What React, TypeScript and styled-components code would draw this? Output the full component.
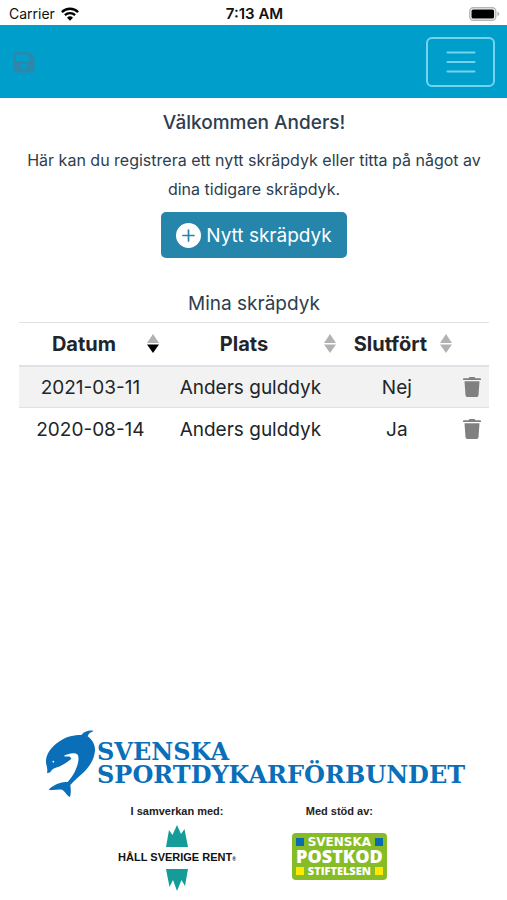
import React, { useState } from 'react';
import styled, { createGlobalStyle } from 'styled-components';

const GlobalStyle = createGlobalStyle`
  *, *::before, *::after { box-sizing: border-box; }
  body {
    margin: 0;
    background: #fff;
    color: #212529;
    font-family: Inter, "Liberation Sans", sans-serif;
  }
`;

const Page = styled.div`
  display: flex;
  flex-direction: column;
  min-height: 100vh;
`;

const StatusBar = styled.div`
  display: grid;
  grid-template-columns: 1fr auto 1fr;
  align-items: center;
  height: 25px;
  padding: 2px 7px 0 9px;
  font-size: 14px;
  color: #111;
`;

const Carrier = styled.div`
  display: flex;
  align-items: center;
  gap: 6px;
`;

const Clock = styled.div`
  font-size: 15px;
  font-weight: 600;
`;

const BatterySlot = styled.div`
  display: flex;
  justify-content: flex-end;
`;

const NavBar = styled.header`
  display: flex;
  align-items: center;
  justify-content: space-between;
  height: 73px;
  padding: 0 12px;
  background: #009fcb;
`;

const SaveButton = styled.button`
  display: flex;
  padding: 0;
  border: 0;
  background: none;
  color: #2f86ab;
`;

const MenuButton = styled.button`
  display: flex;
  align-items: center;
  justify-content: center;
  width: 69px;
  height: 50px;
  padding: 0;
  border: 2px solid #73d4f0;
  border-radius: 6px;
  background: none;
  color: #73d4f0;
`;

const Main = styled.main`
  padding: 11px 18px 24px 19px;
  text-align: center;
  color: #2c3e50;
`;

const Title = styled.h1`
  margin: 0;
  font-size: 19px;
  line-height: 28px;
  font-weight: 500;
`;

const Intro = styled.p`
  margin: 9px 0 8px;
  font-size: 16px;
  line-height: 29px;
`;

const NewButton = styled.button`
  display: inline-flex;
  align-items: center;
  gap: 5px;
  height: 46px;
  padding: 1px 15px 0;
  border: 0;
  border-radius: 5px;
  background: #2585ab;
  color: #fff;
  font: inherit;
  font-size: 19px;
`;

const DiveTable = styled.table`
  width: 100%;
  margin-top: 32px;
  border-collapse: collapse;
  table-layout: fixed;
  font-size: 19px;
  line-height: 28px;
  color: #212529;
`;

const Caption = styled.caption`
  padding-bottom: 4px;
  color: #2c3e50;
`;

const HeadCell = styled.th<{ $width: string }>`
  width: ${(p) => p.$width};
  height: 43px;
  padding: 0 3px 0 2px;
  border-top: 1px solid #dee2e6;
  border-bottom: 2px solid #dee2e6;
  font-size: 20px;
`;

const SortButton = styled.button`
  display: flex;
  align-items: center;
  width: 100%;
  padding: 0;
  border: 0;
  background: none;
  color: inherit;
  font: inherit;
`;

const SortLabel = styled.span`
  flex: 1;
`;

const Row = styled.tr`
  height: 42px;
  &:nth-child(odd) { background: #f2f2f2; }
  & + & { border-top: 1px solid #dee2e6; }
`;

const Cell = styled.td`
  padding: 3px 0 0;
`;

const DeleteButton = styled.button`
  display: flex;
  margin: 0 auto;
  padding: 0 0 3px;
  border: 0;
  background: none;
  color: #808080;
`;

const Footer = styled.footer`
  margin-top: auto;
  padding: 0 40px 9px 44px;
`;

const Federation = styled.div`
  display: flex;
  align-items: center;
`;

const FederationName = styled.div`
  color: #0a6fb8;
  font-family: "DejaVu Serif", serif;
  font-weight: 700;
  font-size: 24px;
  line-height: 23px;
`;

const Partners = styled.div`
  display: flex;
  justify-content: center;
  gap: 56px;
  margin-top: 5px;
  padding-right: 6px;
`;

const Partner = styled.div`
  display: flex;
  flex-direction: column;
  align-items: center;
  font-family: "Liberation Sans", Arial, sans-serif;
  font-weight: 700;
`;

const PartnerLabel = styled.div`
  font-size: 11px;
  line-height: 16px;
  color: #222;
`;

const RentLogo = styled.div`
  display: flex;
  flex-direction: column;
  align-items: center;
  margin-top: 6px;
  font-size: 11px;
  line-height: 20px;
  color: #111;
`;

const Registered = styled.small`
  font-size: 5px;
`;

const PostkodLogo = styled.div`
  display: flex;
  flex-direction: column;
  justify-content: space-between;
  width: 95px;
  height: 47px;
  margin-top: 14px;
  padding: 4px;
  border-radius: 4px;
  background: #86bc25;
  color: #fff;
  font-family: "DejaVu Sans", sans-serif;
`;

const PostkodLine = styled.div`
  display: flex;
  align-items: center;
  justify-content: space-between;
  height: 10px;
  font-size: 12px;
  line-height: 10px;
`;

const Postkod = styled.div`
  font-family: "Open Sans", sans-serif;
  font-weight: 800;
  font-size: 18px;
  line-height: 19px;
  text-align: center;
`;

const Stiftelsen = styled.span`
  font-family: "Open Sans", sans-serif;
  font-size: 11px;
  font-weight: 800;
`;

const Square = styled.span<{ $color: string }>`
  width: 8px;
  height: 8px;
  background: ${(p) => p.$color};
`;

const WifiIcon = () => (
  <svg width="18" height="14" viewBox="0 0 18 14" fill="none" stroke="#000" strokeWidth="2.4" aria-hidden="true">
    <path d="M.9 5.1a11.6 11.6 0 0 1 16.2 0" />
    <path d="M3.9 8.2a7.3 7.3 0 0 1 10.2 0" />
    <path d="M9 13.8 6 10.8a4.3 4.3 0 0 1 6 0z" fill="#000" stroke="none" />
  </svg>
);

const BatteryIcon = () => (
  <svg width="31" height="14" viewBox="0 0 31 14" aria-hidden="true">
    <rect x=".8" y=".8" width="26" height="12.4" rx="3.5" fill="#fff" stroke="#b5b5b5" strokeWidth="1.4" />
    <rect x="2.5" y="2.5" width="22.6" height="9" rx="1.6" />
    <path d="M28.4 4.8q2 .6 2 2.2t-2 2.2z" fill="#b5b5b5" />
  </svg>
);

const SaveIcon = () => (
  <svg width="24" height="24" viewBox="0 0 24 24" aria-hidden="true">
    <path d="M3.500 2H17.500L22.500 7v13.500a2 2 0 0 1-2 2h-17a2 2 0 0 1-2-2V4a2 2 0 0 1 2-2z" fill="currentColor" />
    <path d="M4 4.500h11.500L17 6v5H4z" fill="#009fcb" />
    <circle cx="12" cy="16.500" r="2.800" fill="#009fcb" />
  </svg>
);

const MenuIcon = () => (
  <svg width="30" height="24" viewBox="0 0 30 24" stroke="currentColor" strokeWidth="2" strokeLinecap="round" aria-hidden="true">
    <path d="M1.500 2.500h27M1.500 12h27M1.500 21.500h27" />
  </svg>
);

const PlusIcon = () => (
  <svg width="25" height="25" viewBox="0 0 25 25" aria-hidden="true">
    <circle cx="12.500" cy="12.500" r="12.500" fill="#fff" />
    <path d="M12.500 7v11M7 12.500h11" stroke="#2585ab" strokeWidth="1.700" strokeLinecap="round" />
  </svg>
);

const SortIcon = ({ active }: { active: boolean }) => (
  <svg width="12" height="20" viewBox="0 0 12 20" aria-hidden="true">
    <path d="M6 0l6 9H0z" fill="#b2b2b2" />
    <path d="M0 10.500h12L6 19z" fill={active ? '#000' : '#b2b2b2'} />
  </svg>
);

const TrashIcon = () => (
  <svg width="18" height="20" viewBox="0 0 18 20" fill="currentColor" aria-hidden="true">
    <path d="M.8 1.200h4.700L6.500 0h5l1 1.200h4.700q.8 0 .8.800v1H0V2q0-.8.800-.8zM1.500 4.200h15l-1 14q-.2 1.800-1.700 1.800H4.200q-1.500 0-1.700-1.800z" />
  </svg>
);

const Dolphin = () => (
  <svg width="53" height="70" viewBox="6 6 159 210" role="img" aria-label="Delfin">
    <path
      fill="#0a6fb8"
      d="M155 15C146 12 130 13 118 27C96 27 74 31 54 45C28 61 10 86 12 110C13 119 18 128 15 142L25 139C29 129 41 124 51 122C65 116 78 107 88 98L84 92C79 91 72 93 65 90C74 84 98 77 107 86C112 95 109 111 104 124C98 142 88 155 77 168C61 168 38 173 20 191C34 194 48 189 60 191C70 197 75 209 84 213C88 201 86 186 85 177C96 163 112 152 126 138C143 121 157 99 159 74C160 56 151 42 137 31C139 23 146 18 155 15Z"
    />
    <circle cx="34" cy="107" r="2.500" fill="#fff" />
  </svg>
);

const Peaks = ({ down = false }: { down?: boolean }) => (
  <svg width="22" height="22" viewBox="0 0 22 22" fill="#169c98" aria-hidden="true">
    <path d={down
      ? 'M0 0h22l-3 17-3.500-6-4.500 11-4-11-3.500 7z'
      : 'M0 22L3 5l3.500 5L11 0l4 9 3.500-5L22 22z'} />
  </svg>
);

type SortKey = 'date' | 'place' | 'done';

const columns: { key: SortKey; label: string; width: string }[] = [
  { key: 'date', label: 'Datum', width: '30.4%' },
  { key: 'place', label: 'Plats', width: '37.7%' },
  { key: 'done', label: 'Slutfört', width: '24.6%' },
];

const dives = [
  { date: '2021-03-11', place: 'Anders gulddyk', done: 'Nej' },
  { date: '2020-08-14', place: 'Anders gulddyk', done: 'Ja' },
];

export default function App() {
  const [sortKey, setSortKey] = useState<SortKey>('date');
  const rows = [...dives].sort((a, b) => b[sortKey].localeCompare(a[sortKey]));

  return (
    <>
      <GlobalStyle />
      <Page>
        <StatusBar>
          <Carrier>Carrier <WifiIcon /></Carrier>
          <Clock>7:13 AM</Clock>
          <BatterySlot><BatteryIcon /></BatterySlot>
        </StatusBar>
        <NavBar>
          <SaveButton aria-label="Spara"><SaveIcon /></SaveButton>
          <MenuButton aria-label="Meny"><MenuIcon /></MenuButton>
        </NavBar>
        <Main>
          <Title>Välkommen Anders!</Title>
          <Intro>Här kan du registrera ett nytt skräpdyk eller titta på något av dina tidigare skräpdyk.</Intro>
          <NewButton><PlusIcon />Nytt skräpdyk</NewButton>
          <DiveTable>
            <Caption>Mina skräpdyk</Caption>
            <thead>
              <tr>
                {columns.map((c) => (
                  <HeadCell key={c.key} $width={c.width} aria-sort={sortKey === c.key ? 'descending' : 'none'}>
                    <SortButton onClick={() => setSortKey(c.key)}>
                      <SortLabel>{c.label}</SortLabel>
                      <SortIcon active={sortKey === c.key} />
                    </SortButton>
                  </HeadCell>
                ))}
                <HeadCell $width="7.3%" aria-label="Ta bort" />
              </tr>
            </thead>
            <tbody>
              {rows.map((d) => (
                <Row key={d.date}>
                  <Cell>{d.date}</Cell>
                  <Cell>{d.place}</Cell>
                  <Cell>{d.done}</Cell>
                  <Cell><DeleteButton aria-label={`Ta bort ${d.date}`}><TrashIcon /></DeleteButton></Cell>
                </Row>
              ))}
            </tbody>
          </DiveTable>
        </Main>
        <Footer>
          <Federation>
            <Dolphin />
            <FederationName>SVENSKA<br />SPORTDYKARFÖRBUNDET</FederationName>
          </Federation>
          <Partners>
            <Partner>
              <PartnerLabel>I samverkan med:</PartnerLabel>
              <RentLogo>
                <Peaks />
                <span>HÅLL SVERIGE RENT<Registered>®</Registered></span>
                <Peaks down />
              </RentLogo>
            </Partner>
            <Partner>
              <PartnerLabel>Med stöd av:</PartnerLabel>
              <PostkodLogo>
                <PostkodLine><Square $color="#0a6cb0" />SVENSKA<Square $color="#0a6cb0" /></PostkodLine>
                <Postkod>POSTKOD</Postkod>
                <PostkodLine><Square $color="#ffe900" /><Stiftelsen>STIFTELSEN</Stiftelsen><Square $color="#ffe900" /></PostkodLine>
              </PostkodLogo>
            </Partner>
          </Partners>
        </Footer>
      </Page>
    </>
  );
}
